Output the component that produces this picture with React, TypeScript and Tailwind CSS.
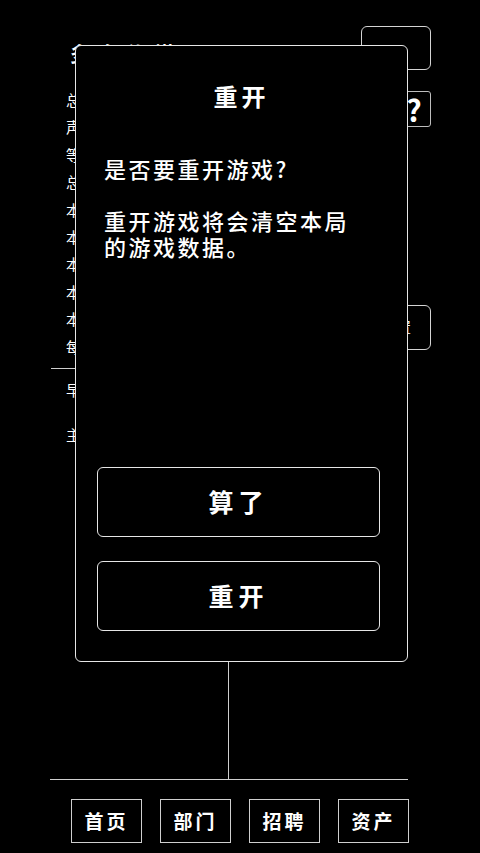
const labels = ["总", "声", "等", "总", "本", "本", "本", "本", "本", "每"];
const tabs = ["首页", "部门", "招聘", "资产"];

export default function App() {
  return (
    <div className="relative w-[480px] h-[853px] overflow-hidden bg-black text-white font-['Noto_Sans_CJK_SC',sans-serif]">
      {/* page behind the dialog */}
      <div className="flex h-[362px] pl-[50px] pr-[49px]">
        <div className="flex flex-1 flex-col">
          <div className="pt-[42px] pl-[20px] text-[20px] leading-[24px] tracking-[8px] font-bold whitespace-nowrap">
            多多传媒公司1018
          </div>
          <div className="mt-[20px] pl-[16px] flex flex-col text-[15px] leading-[27.4px]">
            {labels.map((l, i) => (
              <span key={i}>{l}</span>
            ))}
          </div>
        </div>
        <div className="flex w-[70px] flex-col items-end pt-[26px]">
          <div className="flex h-[44px] w-[70px] justify-center rounded-md border border-[#d4d4d4] pt-[15px] pr-[8px] text-[13px] leading-[20px]">
            存档
          </div>
          <div className="mt-[21px] flex h-[36px] w-[34px] items-center justify-center rounded-[3px] border border-[#bdbdbd] text-[30px] font-bold leading-none">
            ?
          </div>
          <div className="mt-[178px] flex h-[45px] w-[70px] items-center justify-center rounded-md border border-[#d4d4d4] text-[15px]">
            设置
          </div>
        </div>
      </div>
      <div className="mt-[6px] ml-[51px] mr-[72px] border-t border-[#cfcfcf]" />
      <div className="mx-[50px] mr-[72px] grid h-[411px] grid-cols-[179px_1fr] border-b border-[#cfcfcf]">
        <div className="flex flex-col border-r border-[#cfcfcf] pl-[16px] pt-[11px] text-[15px] leading-[20px]">
          <span>早</span>
          <span className="mt-[25px]">主</span>
        </div>
        <div />
      </div>
      <div className="mt-[19px] flex gap-[18px] pl-[71px]">
        {tabs.map((t) => (
          <div
            key={t}
            className="flex h-[44px] w-[71px] items-center justify-center border border-[#cfcfcf] text-[19px] font-bold tracking-[3px]"
          >
            {t}
          </div>
        ))}
      </div>

      {/* dialog */}
      <div className="absolute left-[75px] top-[45px] flex h-[617px] w-[333px] flex-col rounded-[6px] border-[1.5px] border-[#e6e6e6] bg-black">
        <div className="pt-[34px] text-center text-[24px] leading-[32px] font-bold tracking-[4px]">重开</div>
        <div className="mt-[43px] pl-[28px] text-[22px] leading-[26px] font-medium tracking-[2.5px] whitespace-pre-line">
          {"是否要重开游戏?\n\n重开游戏将会清空本局\n的游戏数据。"}
        </div>
        <div className="mt-auto flex flex-col gap-[24px] pb-[30px] pl-[21px]">
          {["算了", "重开"].map((b) => (
            <div
              key={b}
              className="flex h-[70px] w-[283px] items-center justify-center rounded-[6px] border-[1.5px] border-[#e6e6e6] text-[25px] font-bold tracking-[5px]"
            >
              {b}
            </div>
          ))}
        </div>
      </div>
    </div>
  );
}
